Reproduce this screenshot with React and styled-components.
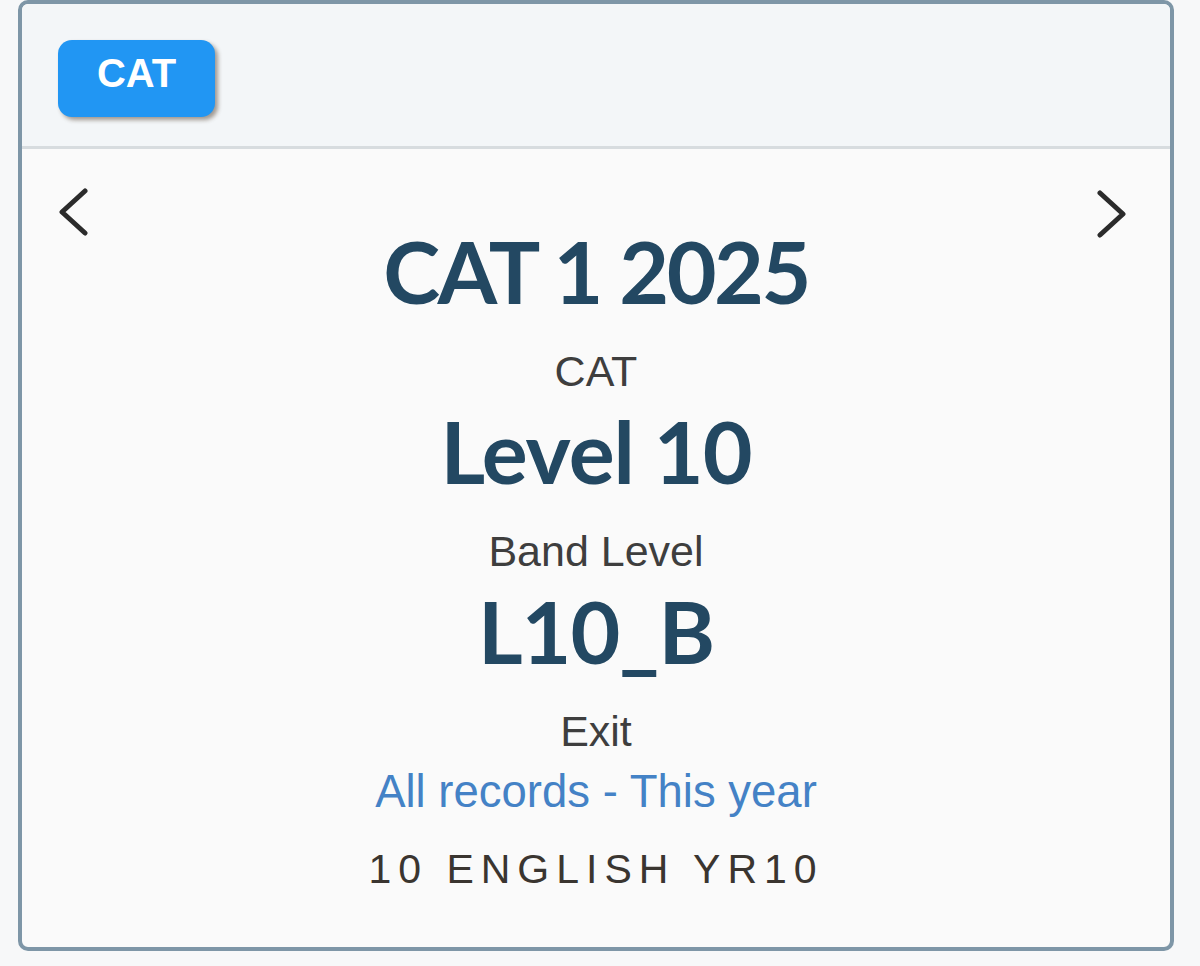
import React from "react"
import styled, { createGlobalStyle } from "styled-components"

const GlobalStyle = createGlobalStyle`
  body {
    margin: 0;
    background: #f7f8f9;
    font-family: "Liberation Sans", Arial, sans-serif;
  }
`

const Chevron = ({ dir }) => (
  <svg width="34" height="48" viewBox="0 0 34 48">
    {dir === "left" ? (
      <path d="M28 3 L5 24 L28 45" fill="none" stroke="#2b2b2b" strokeWidth="5" strokeLinecap="round" strokeLinejoin="round" />
    ) : (
      <path d="M6 3 L29 24 L6 45" fill="none" stroke="#2b2b2b" strokeWidth="5" strokeLinecap="round" strokeLinejoin="round" />
    )}
  </svg>
)

export default function App() {
  return (
    <>
      <GlobalStyle />
      <Card>
        <Header>
          <Tag>CAT</Tag>
        </Header>
        <Body>
          <NavButton side="left" aria-label="previous">
            <Chevron dir="left" />
          </NavButton>
          <Content>
            <BigValue tight>CAT 1 2025</BigValue>
            <Label>CAT</Label>
            <BigValue>Level 10</BigValue>
            <Label>Band Level</Label>
            <BigValue>L10_B</BigValue>
            <Label>Exit</Label>
            <Scope>All records - This year</Scope>
            <ClassName>10 ENGLISH YR10</ClassName>
          </Content>
          <NavButton side="right" aria-label="next">
            <Chevron dir="right" />
          </NavButton>
        </Body>
      </Card>
    </>
  )
}

const Card = styled.div`
  box-sizing: border-box;
  margin-left: 18px;
  width: 1156px;
  height: 951px;
  border: 4px solid #7e96a7;
  border-radius: 10px;
  background: #fafafa;
  overflow: hidden;
  display: flex;
  flex-direction: column;
`

const Header = styled.div`
  box-sizing: border-box;
  height: 145px;
  padding: 36px 0 0 36px;
  background: #f3f6f8;
  border-bottom: 3px solid #d7dcdf;
`

const Tag = styled.button`
  width: 157px;
  height: 77px;
  border: none;
  border-radius: 14px;
  background: #2196f3;
  box-shadow: 3px 3px 4px rgba(60, 40, 20, 0.45);
  color: #ffffff;
  font-family: "Liberation Sans", Arial, sans-serif;
  font-weight: 700;
  font-size: 40px;
  padding: 0 0 10px;
`

const Body = styled.div`
  display: grid;
  grid-template-columns: 1fr auto 1fr;
  align-items: start;
  padding: 39px 35px 0;
`

const NavButton = styled.div`
  justify-self: ${p => (p.side === "left" ? "start" : "end")};
  margin-top: ${p => (p.side === "left" ? "0" : "2px")};
  margin-right: ${p => (p.side === "left" ? "0" : "7px")};
  display: flex;
`

const Content = styled.div`
  display: flex;
  flex-direction: column;
  align-items: center;
  text-align: center;
  padding-top: 33px;
`

const BigValue = styled.div`
  font-family: Lato, "Noto Sans", sans-serif;
  font-weight: 700;
  font-size: 86px;
  line-height: 100px;
  color: #234862;
  letter-spacing: ${p => (p.tight ? "-2.5px" : "-1px")};
`

const Label = styled.div`
  margin-top: 20px;
  font-size: 43px;
  line-height: 60px;
  color: #3e3e3e;
`

const Scope = styled.div`
  font-size: 45.5px;
  line-height: 62px;
  color: #4482c6;
`

const ClassName = styled.div`
  margin-top: 8px;
  font-size: 41px;
  line-height: 76px;
  letter-spacing: 7px;
  color: #3a3530;
`
